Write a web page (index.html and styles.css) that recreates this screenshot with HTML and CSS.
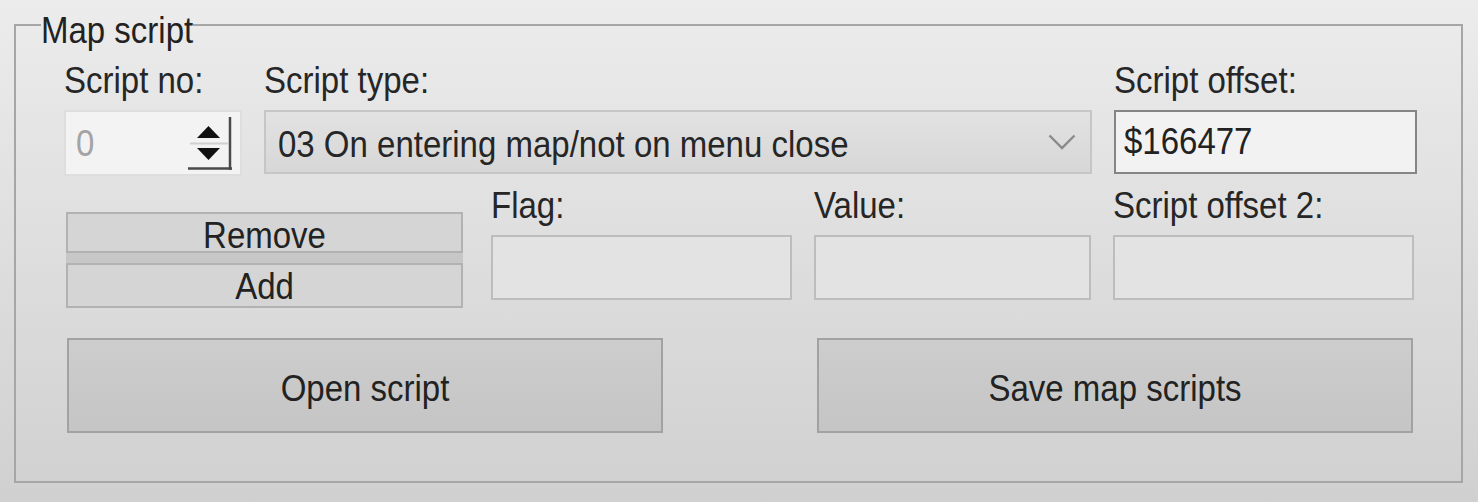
FILE: index.html
```html
<!DOCTYPE html>
<html>
<head>
<meta charset="utf-8">
<title>Map script</title>
<link rel="stylesheet" href="styles.css">
</head>
<body>
<fieldset class="group">
  <legend class="group-title"><span class="tx">Map script</span></legend>

  <div class="row row-top">
    <div class="field f-no">
      <span class="lbl"><span class="tx">Script no:</span></span>
      <div class="spin">
        <span class="spin-val tx">0</span>
        <svg class="spin-btns" width="44" height="53" viewBox="0 0 44 53">
          <line x1="2" y1="26.5" x2="40" y2="26.5" stroke="#d0d0d0" stroke-width="2"/>
          <polygon points="9,21 32,21 20.5,9" fill="#111"/>
          <polygon points="9,31 32,31 20.5,43" fill="#111"/>
          <line x1="42" y1="0" x2="42" y2="53" stroke="#4a4a4a" stroke-width="2.5"/>
          <line x1="0" y1="51.5" x2="44" y2="51.5" stroke="#4a4a4a" stroke-width="2.5"/>
        </svg>
      </div>
    </div>
    <div class="field f-type">
      <span class="lbl"><span class="tx">Script type:</span></span>
      <div class="combo">
        <span class="combo-text tx">03 On entering map/not on menu close</span>
        <svg class="chev" width="28" height="16" viewBox="0 0 28 16">
          <polyline points="1.5,1.5 14,14 26.5,1.5" fill="none" stroke="#8a8a8a" stroke-width="2.4"/>
        </svg>
      </div>
    </div>
    <div class="field f-off">
      <span class="lbl"><span class="tx">Script offset:</span></span>
      <div class="tb tb-active"><span class="tx">$166477</span></div>
    </div>
  </div>

  <div class="row row-mid">
    <div class="stack">
      <button class="btn btn-remove"><span class="tx">Remove</span></button>
      <button class="btn btn-add"><span class="tx">Add</span></button>
    </div>
    <div class="field f-flag">
      <span class="lbl"><span class="tx">Flag:</span></span>
      <div class="tb tb-off"></div>
    </div>
    <div class="field f-value">
      <span class="lbl"><span class="tx">Value:</span></span>
      <div class="tb tb-off"></div>
    </div>
    <div class="field f-off2">
      <span class="lbl"><span class="tx">Script offset 2:</span></span>
      <div class="tb tb-off"></div>
    </div>
  </div>

  <div class="row row-bottom">
    <button class="btn btn-big"><span class="tx">Open script</span></button>
    <button class="btn btn-big"><span class="tx">Save map scripts</span></button>
  </div>
</fieldset>
</body>
</html>
```

FILE: styles.css
```css
* {
  box-sizing: border-box;
}

html, body {
  margin: 0;
  padding: 0;
}

body {
  width: 1478px;
  height: 502px;
  overflow: hidden;
  background: linear-gradient(to bottom, #ececec 0%, #dedede 50%, #d0d0d0 100%);
  font-family: "Liberation Sans", Arial, sans-serif;
  font-size: 33px;
  color: #262626;
}

/* the original UI font is taller and narrower than Arial */
.tx {
  display: inline-block;
  transform: scaleY(1.13);
  transform-origin: 50% 60%;
}

.group {
  margin: 0 0 0 14px;
  width: 1449px;
  min-width: 0;
  border: 2px solid #a6a6a6;
  padding: 13px 0 48px 0;
}

.group-title {
  margin-left: 25px;
  padding: 13px 0 0 0;
  line-height: 36px;
  color: #222;
}

.row {
  display: flex;
  align-items: flex-start;
}

.field {
  display: flex;
  flex-direction: column;
  gap: 10px;
}

.lbl {
  height: 38px;
  line-height: 38px;
  white-space: nowrap;
}

/* row 1 */
.row-top {
  padding-left: 48px;
  gap: 22px;
}

.f-no { width: 178px; }
.f-type { width: 828px; }
.f-off { width: 303px; }

.spin {
  height: 66px;
  display: flex;
  align-items: center;
  justify-content: space-between;
  padding: 0 8px 0 10px;
  background: #f3f3f3;
  border: 2px solid #dedede;
}

.spin-val {
  color: #a4a4a4;
  padding-top: 2px;
}

.spin-btns {
  display: block;
  margin-top: 1px;
}

.combo {
  height: 64px;
  display: flex;
  align-items: center;
  justify-content: space-between;
  padding: 6px 14px 0 12px;
  background: linear-gradient(to bottom, #e2e2e2, #d7d7d7);
  border: 2px solid #c6c6c6;
  white-space: nowrap;
}

.chev {
  display: block;
  margin-top: -6px;
}

.tb {
  height: 64px;
  display: flex;
  align-items: center;
  padding: 0 8px;
}

.tb-active {
  background: #f2f2f2;
  border: 2px solid #858585;
  color: #222;
}

.tb-off {
  height: 65px;
  background: #e3e3e3;
  border: 2px solid #bdbdbd;
}

/* row 2 */
.row-mid {
  margin-top: 11px;
  padding-left: 50px;
  gap: 22px;
}

.stack {
  width: 397px;
  margin-top: 25px;
  margin-right: 6px;
  display: flex;
  flex-direction: column;
  gap: 10px;
  background: #c7c7c7;
}

.btn {
  font-family: "Liberation Sans", Arial, sans-serif;
  font-size: 33px;
  color: #222;
  margin: 0;
  display: flex;
  align-items: center;
  justify-content: center;
  white-space: nowrap;
}

.btn-remove,
.btn-add {
  width: 100%;
  background: #d5d5d5;
  border: 2px solid #b2b2b2;
  padding: 6px 0 0 0;
  line-height: 33px;
}

.btn-remove {
  height: 41px;
}

.btn-add {
  height: 45px;
  padding-top: 2px;
}

.f-flag { width: 301px; }
.f-value { width: 277px; }
.f-off2 { width: 301px; }

/* row 3 */
.row-bottom {
  margin-top: 30px;
  padding-left: 51px;
  gap: 154px;
}

.btn-big {
  width: 596px;
  height: 95px;
  padding: 6px 0 0 0;
  background: linear-gradient(to bottom, #cdcdcd, #c5c5c5);
  border: 2px solid #a2a2a2;
}
```
